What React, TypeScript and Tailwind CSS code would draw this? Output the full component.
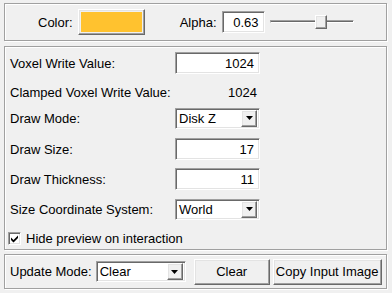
import { useState } from "react";

const sunken =
  "bg-white border border-[#a0a0a0] border-b-white border-r-white shadow-[inset_1px_1px_0_#696969,inset_-1px_-1px_0_#e3e3e3]";
const raised =
  "bg-[#f0f0f0] border border-white border-b-[#696969] border-r-[#696969] shadow-[inset_-1px_-1px_0_#a0a0a0,inset_1px_1px_0_#e3e3e3]";
const panel = "border border-[#a0a0a0] shadow-[inset_1px_1px_0_#fff,1px_1px_0_#fff]";

function NumberBox({ value }: { value: string }) {
  return (
    <div className={`${sunken} w-[85px] h-[22px] flex items-center justify-end pr-[5px]`}>
      {value}
    </div>
  );
}

function Combo({ value, width }: { value: string; width: string }) {
  return (
    <div className={`${sunken} ${width} h-[21px] flex items-center pl-[3px] pr-[2px]`}>
      <span className="flex-1">{value}</span>
      <div className={`${raised} w-[16px] h-[17px] flex items-center justify-center`}>
        <svg width="7" height="4" viewBox="0 0 7 4">
          <path d="M0 0h7L3.5 4z" fill="#000" />
        </svg>
      </div>
    </div>
  );
}

function Row({ label, mt, children }: { label: string; mt: string; children: React.ReactNode }) {
  return (
    <div className={`flex items-center h-[22px] ${mt}`}>
      <span className="w-[165px] shrink-0">{label}</span>
      {children}
    </div>
  );
}

export default function App() {
  const [hide, setHide] = useState(true);

  return (
    <main className="w-[392px] h-[293px] bg-[#f0f0f0] text-[13px] text-black font-['Liberation_Sans',Arial,sans-serif] leading-none flex flex-col pl-[4px] pr-[5px] pt-[3px] overflow-hidden">
      {/* Color / alpha */}
      <section className={`${panel} h-[38px] flex items-center`}>
        <span className="ml-[33px]">Color:</span>
        <div className={`${raised} ml-[5px] w-[67px] h-[26px] p-[2px]`}>
          <div className="w-full h-full bg-[#ffc22f]" />
        </div>
        <span className="ml-[35px]">Alpha:</span>
        <div className={`${sunken} ml-[5px] w-[43px] h-[22px] flex items-center justify-end pr-[5px]`}>
          0.63
        </div>
        <div className="relative ml-[5px] w-[84px] h-[14px]">
          <div className="absolute left-0 right-0 top-[5px] h-[3px] border-t border-l border-[#a0a0a0] border-b border-b-white border-r border-r-white bg-[#696969]" />
          <div className={`${raised} absolute left-[45px] top-0 w-[12px] h-[14px]`} />
        </div>
      </section>

      {/* Drawing options */}
      <section className={`${panel} mt-[5px] h-[204px] flex flex-col pl-[5px]`}>
        <Row label="Voxel Write Value:" mt="mt-[5px]">
          <NumberBox value="1024" />
        </Row>
        <Row label="Clamped Voxel Write Value:" mt="mt-[7px]">
          <span className="w-[85px] text-right pr-[3px]">1024</span>
        </Row>
        <Row label="Draw Mode:" mt="mt-[4px]">
          <Combo value="Disk Z" width="w-[85px]" />
        </Row>
        <Row label="Draw Size:" mt="mt-[9px]">
          <NumberBox value="17" />
        </Row>
        <Row label="Draw Thickness:" mt="mt-[8px]">
          <NumberBox value="11" />
        </Row>
        <Row label="Size Coordinate System:" mt="mt-[8px]">
          <Combo value="World" width="w-[85px]" />
        </Row>
        <label className="flex items-center h-[22px] mt-[7px] ml-[-2px] cursor-default">
          <span
            className={`${sunken} w-[13px] h-[13px] flex items-center justify-center`}
            onClick={() => setHide(!hide)}
          >
            {hide && (
              <svg width="9" height="9" viewBox="0 0 9 9">
                <path d="M1 3.5l2.5 2.5L8 1.5V4L3.5 8.5 1 6z" fill="#000" />
              </svg>
            )}
          </span>
          <span className="ml-[5px]">Hide preview on interaction</span>
        </label>
      </section>

      {/* Update */}
      <section className={`${panel} mt-[4px] h-[35px] flex items-center pl-[5px]`}>
        <span>Update Mode:</span>
        <div className="ml-[4px]">
          <Combo value="Clear" width="w-[90px]" />
        </div>
        <button className={`${raised} ml-[8px] w-[76px] h-[26px]`}>Clear</button>
        <button className={`${raised} ml-[3px] w-[109px] h-[26px]`}>Copy Input Image</button>
      </section>
    </main>
  );
}
